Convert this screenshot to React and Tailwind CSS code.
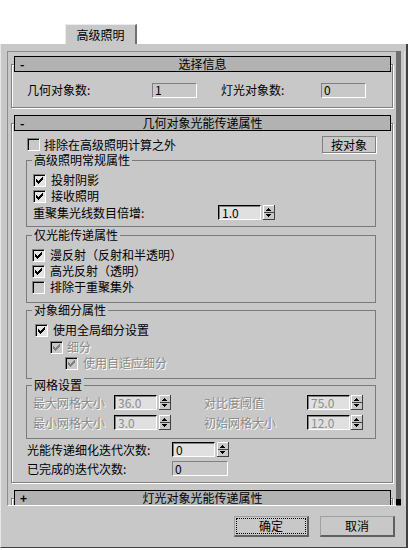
import React from "react";

// sunken checkbox with the classic 7x7 tick
function Check({ on, dim }) {
  return (
    <span
      className={`w-[13px] h-[13px] shrink-0 flex items-center justify-center border border-t-[#808080] border-l-[#808080] border-b-white border-r-white shadow-[inset_1px_1px_0_#000] ${
        dim ? "bg-[#c8c8c8]" : "bg-[#e4e4e4]"
      }`}
    >
      {on && (
        <svg width="7" height="7" viewBox="0 0 7 7" shapeRendering="crispEdges">
          <path
            d="M6 0h1v1h-1z M5 1h2v1h-2z M0 2h1v1h-1z M4 2h3v1h-3z M0 3h2v1h-2z M3 3h3v1h-3z M0 4h5v1h-5z M1 5h3v1h-3z M2 6h1v1h-1z"
            fill={dim ? "#808080" : "#000"}
          />
        </svg>
      )}
    </span>
  );
}

function Spin() {
  return (
    <svg width="12" height="15" viewBox="0 0 12 15" shapeRendering="crispEdges" className="shrink-0">
      <rect width="12" height="15" fill="#c8c8c8" />
      <rect width="12" height="1" fill="#fff" />
      <rect width="1" height="15" fill="#fff" />
      <rect y="14" width="12" height="1" fill="#404040" />
      <rect x="11" width="1" height="15" fill="#404040" />
      <rect x="1" y="7" width="10" height="1" fill="#404040" />
      <path d="M5 3h1v1h1v1h1v1h-5v-1h1v-1h1z" fill="#000" />
      <path d="M3 9h5v1h-1v1h-1v1h-1v-1h-1v-1h-1z" fill="#000" />
    </svg>
  );
}

function Edit({ v, dim }) {
  return (
    <span
      className={`w-[43px] h-[15px] shrink-0 flex items-center pl-[3px] bg-[#e0e0e0] border border-t-black border-l-black border-b-white border-r-white shadow-[inset_1px_1px_0_#808080] leading-none ${
        dim ? "text-[#8c8c8c]" : "text-black"
      }`}
    >
      {v}
    </span>
  );
}

function Show({ v, w }) {
  return (
    <span className={`${w} h-[15px] shrink-0 flex items-center pl-[2px] border border-t-[#808080] border-l-[#808080] border-b-white border-r-white leading-none`}>
      {v}
    </span>
  );
}

function Bar({ sign, title }) {
  return (
    <div className="-mt-[9px] ml-[2px] mr-[1px] h-[16px] bg-[#b2b2b2] border border-black grid grid-cols-[1fr_auto_1fr] items-center leading-none">
      <span className="pl-[5px] font-bold">{sign}</span>
      <span>{title}</span>
      <span />
    </div>
  );
}

function Group({ title, className, children }) {
  return (
    <div className={`ml-[14px] w-[350px] border border-[#7a7a7a] ${className}`}>
      <div className="-mt-[8px] ml-[5px] h-[14px] flex">
        <span className="px-[2px] bg-[#c8c8c8] leading-[14px]">{title}</span>
      </div>
      {children}
    </div>
  );
}

const dim = "text-[#8a8a8a] [text-shadow:1px_1px_0_#fff]";
const frame = "ml-[3px] w-[382px] border border-[#808080] shadow-[1px_1px_0_#fff,inset_1px_1px_0_#fff]";

export default function App() {
  return (
    <div className="w-[408px] h-[550px] bg-white text-[12px] leading-[14px] text-black font-['Noto_Sans_CJK_SC','Liberation_Sans',sans-serif] overflow-hidden">
      <div className="h-[24px]" />
      <div className="flex h-[20px]">
        <div className="w-[65px]" />
        <div className="w-[72px] bg-[#c8c8c8] border-t border-l border-[#ececec] border-r-2 border-r-[#707070] flex items-center justify-center leading-none">
          高级照明
        </div>
        <div className="flex-1" />
      </div>

      <div className="h-[504px] bg-[#c8c8c8] border-l border-l-[#e8e8e8] border-r-2 border-r-[#404040] border-b border-b-[#404040] flex flex-col">
        <div className="mt-[7px] ml-[6px] h-[455px] flex">
          <div className="w-[389px] h-full overflow-hidden border-t border-l border-[#8c8c8c] border-b border-b-white">
            {/* 选择信息 */}
            <div className={`mt-[12px] ${frame}`}>
              <Bar sign="-" title="选择信息" />
              <div className="mt-[11px] mb-[10px] h-[14px] flex items-center pl-[15px]">
                <span className="w-[125px]">几何对象数:</span>
                <Show v="1" w="w-[45px]" />
                <span className="ml-[24px] w-[100px]">灯光对象数:</span>
                <Show v="0" w="w-[45px]" />
              </div>
            </div>

            {/* 几何对象光能传递属性 */}
            <div className={`mt-[15px] pb-[6px] ${frame}`}>
              <Bar sign="-" title="几何对象光能传递属性" />
              <div className="mt-[5px] h-[17px] flex items-center justify-between pl-[15px] pr-[16px]">
                <span className="flex items-center gap-[4px]">
                  <Check dim />
                  排除在高级照明计算之外
                </span>
                <button className="w-[54px] h-[17px] border border-[#808080] shadow-[1px_1px_0_#fff] leading-none">
                  按对象
                </button>
              </div>

              <Group title="高级照明常规属性" className="mt-[7px] pb-[6px]">
                <div className="mt-[5px] h-[16px] flex items-center gap-[5px] pl-[6px]">
                  <Check on />
                  投射阴影
                </div>
                <div className="h-[16px] flex items-center gap-[5px] pl-[6px]">
                  <Check on />
                  接收照明
                </div>
                <div className="mt-[1px] h-[15px] flex items-center pl-[6px]">
                  <span className="w-[185px]">重聚集光线数目倍增:</span>
                  <Edit v="1.0" />
                  <span className="ml-[2px] flex">
                    <Spin />
                  </span>
                </div>
              </Group>

              <Group title="仅光能传递属性" className="mt-[8px] pb-[7px]">
                <div className="mt-[5px] h-[16px] flex items-center gap-[5px] pl-[5px]">
                  <Check on />
                  漫反射（反射和半透明）
                </div>
                <div className="h-[16px] flex items-center gap-[5px] pl-[5px]">
                  <Check on />
                  高光反射（透明）
                </div>
                <div className="h-[16px] flex items-center gap-[5px] pl-[5px]">
                  <Check dim />
                  排除于重聚集外
                </div>
              </Group>

              <Group title="对象细分属性" className="mt-[7px] pb-[7px]">
                <div className="mt-[5px] h-[16px] flex items-center gap-[5px] pl-[8px]">
                  <Check on />
                  使用全局细分设置
                </div>
                <div className={`mt-[1px] h-[16px] flex items-center gap-[4px] pl-[23px] ${dim}`}>
                  <Check on dim />
                  细分
                </div>
                <div className={`h-[16px] flex items-center gap-[5px] pl-[38px] ${dim}`}>
                  <Check on dim />
                  使用自适应细分
                </div>
              </Group>

              <Group title="网格设置" className="mt-[6px] pb-[8px]">
                <div className="mt-[3px] h-[15px] flex items-center pl-[6px]">
                  <span className={`w-[81px] ${dim}`}>最大网格大小</span>
                  <Edit v="36.0" dim />
                  <span className="ml-[2px] flex">
                    <Spin />
                  </span>
                  <span className={`ml-[33px] w-[103px] ${dim}`}>对比度阈值</span>
                  <Edit v="75.0" dim />
                  <span className="ml-[1px] flex">
                    <Spin />
                  </span>
                </div>
                <div className="mt-[5px] h-[15px] flex items-center pl-[6px]">
                  <span className={`w-[81px] ${dim}`}>最小网格大小</span>
                  <Edit v="3.0" dim />
                  <span className="ml-[2px] flex">
                    <Spin />
                  </span>
                  <span className={`ml-[33px] w-[103px] ${dim}`}>初始网格大小</span>
                  <Edit v="12.0" dim />
                  <span className="ml-[1px] flex">
                    <Spin />
                  </span>
                </div>
              </Group>

              <div className="mt-[3px] h-[15px] flex items-center pl-[15px]">
                <span className="w-[145px]">光能传递细化迭代次数:</span>
                <Edit v="0" />
                <span className="ml-[2px] flex">
                  <Spin />
                </span>
              </div>
              <div className="mt-[4px] h-[15px] flex items-center pl-[15px]">
                <span className="w-[145px]">已完成的迭代次数:</span>
                <Show v="0" w="w-[56px]" />
              </div>
            </div>

            {/* 灯光对象光能传递属性 */}
            <div className={`mt-[15px] h-[30px] ${frame}`}>
              <Bar sign="+" title="灯光对象光能传递属性" />
            </div>
          </div>

          {/* scroll track */}
          <div className="w-[5px] h-full bg-[#6e6e6e] flex flex-col justify-end">
            <div className="h-[6px] mb-[1px] bg-black" />
          </div>
          <div className="w-[1px] h-full bg-[#e0e0e0] ml-[3px]" />
        </div>

        <div className="mt-[10px] flex justify-end gap-[11px] pr-[11px]">
          <button className="w-[75px] h-[21px] p-[1px] border-t border-l border-[#a0a0a0] border-r-2 border-b-2 border-r-[#606060] border-b-[#606060]">
            <span className="w-full h-full flex items-center justify-center border border-dotted border-black leading-none">
              确定
            </span>
          </button>
          <button className="w-[75px] h-[21px] border-t border-l border-[#a0a0a0] border-r-2 border-b-2 border-r-[#606060] border-b-[#606060] flex items-center justify-center leading-none">
            取消
          </button>
        </div>
      </div>
    </div>
  );
}
